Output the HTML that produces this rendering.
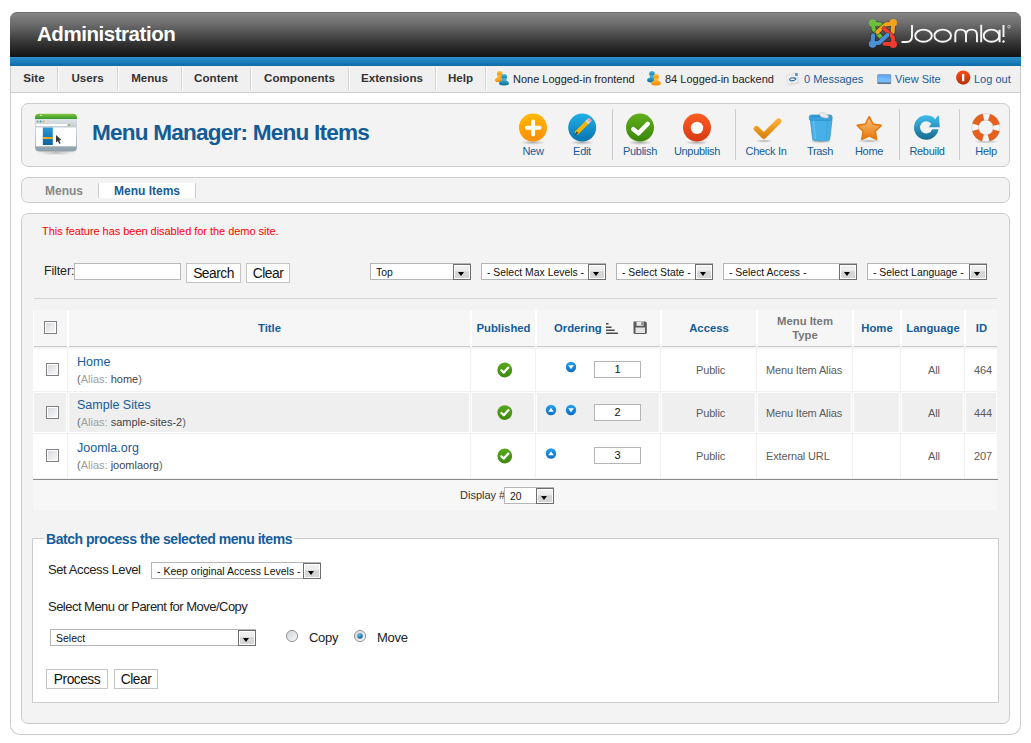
<!DOCTYPE html>
<html><head><meta charset="utf-8">
<style>
*{margin:0;padding:0;box-sizing:border-box}
html,body{width:1031px;height:743px;overflow:hidden;background:#fff;font-family:"Liberation Sans",sans-serif;color:#333}
.a{position:absolute}
#outer{left:10px;top:20px;width:1011px;height:715px;border:1px solid #ccc;border-top:none;border-radius:0 0 10px 10px;background:#fff}
#hdr{left:10px;top:12px;width:1011px;height:45px;border-radius:7px 7px 0 0;background:linear-gradient(#858585 0%,#6c6c6c 25%,#4c4c4c 50%,#2c2c2c 75%,#131313 100%);border-top:1px solid #6e6e6e}
#hdr h1{position:absolute;left:27px;top:9px;font-size:20.5px;font-weight:bold;color:#fff;letter-spacing:-0.45px}
#blue{left:10px;top:57px;width:1011px;height:9px;background:linear-gradient(#2b93cf,#0d6ca8)}
#menubar{left:11px;top:66px;width:1009px;height:27px;background:#f0f0f0;border-bottom:1px solid #ccc}
.mi{position:absolute;top:0;height:26px;line-height:24px;font-size:11.6px;font-weight:bold;color:#333;text-align:center}
.msep{position:absolute;top:1px;width:2px;height:23px;border-left:1px solid #d4d4d4;background:#fff}
.st{position:absolute;top:0;height:26px;line-height:26px;font-size:11px;color:#222;white-space:nowrap}
.st.l{color:#155c9a}
.box{background:#f3f3f3;border:1px solid #ccc;border-radius:7px}
.tb{position:absolute;text-align:center;font-size:11px;letter-spacing:-0.3px;color:#155c9a;white-space:nowrap}
.tsep{position:absolute;top:109px;width:1px;height:51px;background:#ccc}
.sel{position:absolute;height:17px;background:#fff;border:1px solid #b5b5b5;font-size:10.4px;color:#111;line-height:17px;padding-left:5px;white-space:nowrap}
.sel .ar{position:absolute;right:-1px;top:0px;width:18px;height:16px;border:1px solid #6e6e6e;background:#fff}
.sel .ar:before{content:"";position:absolute;left:1px;top:1px;right:1px;bottom:1px;background:linear-gradient(#f0f0f0 0,#ececec 45%,#d6d6d6 46%,#d6d6d6 100%)}
.sel .ar:after{content:"";position:absolute;left:4px;top:7px;border-left:3.5px solid transparent;border-right:3.5px solid transparent;border-top:4px solid #000}
.btn{position:absolute;background:#fff;border:1px solid #c4c4c4;font-size:13.8px;letter-spacing:-0.5px;color:#111;text-align:center}
.th{position:absolute;top:310px;height:37px;background:#f6f6f6;border-bottom:1px solid #c9c9c9;font-size:11.3px;font-weight:bold;color:#155c9a;text-align:center;line-height:36px}
.cb{position:absolute;width:13px;height:13px;border:1px solid #7f7f7f;background:#fff}
.cb:after{content:"";position:absolute;left:1px;top:1px;width:9px;height:9px;background:linear-gradient(135deg,#d9dbe0,#f8f8f8)}

.row{position:absolute;left:33px;width:964px;background:#f0f0f0}
.td{position:absolute;top:0;bottom:1px;background:#fff}
.r1 .td{border:1px solid #fff;background:#efefef}
.tx{position:absolute;font-size:11px;color:#5c5c5c;white-space:nowrap;letter-spacing:-0.15px}
.lnk{position:absolute;font-size:12.5px;color:#155c9a;white-space:nowrap}
.al{position:absolute;font-size:11px;color:#666;white-space:nowrap}
.al i{font-style:normal;color:#a0a0a0}
.al b{font-weight:normal;color:#444}
.oi{position:absolute;width:47px;height:17px;background:#fff;border:1px solid #b4b4b4;font-size:11px;color:#111;text-align:center;line-height:15px}
</style></head><body>
<div id="outer" class="a"></div>
<div id="hdr" class="a"><h1>Administration</h1></div>
<div id="blue" class="a"></div>
<div id="menubar" class="a">
  <div class="mi" style="left:0;width:46px">Site</div><div class="msep" style="left:46px"></div>
  <div class="mi" style="left:47px;width:59px">Users</div><div class="msep" style="left:106px"></div>
  <div class="mi" style="left:107px;width:63px">Menus</div><div class="msep" style="left:170px"></div>
  <div class="mi" style="left:171px;width:68px">Content</div><div class="msep" style="left:239px"></div>
  <div class="mi" style="left:240px;width:97px">Components</div><div class="msep" style="left:337px"></div>
  <div class="mi" style="left:338px;width:86px">Extensions</div><div class="msep" style="left:424px"></div>
  <div class="mi" style="left:425px;width:49px">Help</div><div class="msep" style="left:474px"></div>
  <div class="st" style="left:502px">None Logged-in frontend</div>
  <div class="st" style="left:654px">84 Logged-in backend</div>
  <div class="st l" style="left:793px">0 Messages</div>
  <div class="st l" style="left:884px">View Site</div>
  <div class="st l" style="left:963px">Log out</div>
</div>

<div class="a box" style="left:21px;top:103px;width:989px;height:64px"></div>
<div class="a" style="left:92px;top:120px;font-size:22.6px;font-weight:bold;color:#135c95;white-space:nowrap;letter-spacing:-0.8px">Menu Manager: Menu Items</div>

<div class="a box" style="left:21px;top:177px;width:989px;height:26px"></div>
<div class="a" style="left:45px;top:184px;font-size:12px;font-weight:bold;color:#888">Menus</div>
<div class="a" style="left:98px;top:183px;width:1px;height:15px;background:#ccc"></div>
<div class="a" style="left:99px;top:183px;width:96px;height:15px;background:#fff"></div>
<div class="a" style="left:195px;top:183px;width:1px;height:15px;background:#ccc"></div>
<div class="a" style="left:114px;top:184px;font-size:12px;font-weight:bold;color:#155c9a">Menu Items</div>

<div class="a box" style="left:21px;top:213px;width:989px;height:511px"></div>
<div class="a" style="left:42px;top:225px;font-size:11px;color:#f00;letter-spacing:-0.04px">This feature has been disabled for the demo site.</div>


<!-- filter -->
<div class="a" style="left:44px;top:264px;font-size:12.4px;color:#222;letter-spacing:-0.1px">Filter:</div>
<div class="a" style="left:74px;top:263px;width:107px;height:17px;background:#fff;border:1px solid #b8b8b8"></div>
<div class="btn" style="left:186px;top:263px;width:55px;height:20px;line-height:20px">Search</div>
<div class="btn" style="left:246px;top:263px;width:44px;height:20px;line-height:20px">Clear</div>
<div class="sel" style="left:370px;top:263px;width:101px">Top<div class="ar"></div></div>
<div class="sel" style="left:481px;top:263px;width:125px">- Select Max Levels -<div class="ar"></div></div>
<div class="sel" style="left:616px;top:263px;width:97px">- Select State -<div class="ar"></div></div>
<div class="sel" style="left:723px;top:263px;width:134px">- Select Access -<div class="ar"></div></div>
<div class="sel" style="left:867px;top:263px;width:120px">- Select Language -<div class="ar"></div></div>
<div class="a" style="left:34px;top:298px;width:963px;height:1px;background:#d4d4d4"></div>

<!-- table header -->
<div class="a" style="left:33px;top:310px;width:964px;height:37px;background:#fff"></div>
<div class="th" style="left:34px;width:33px"></div>
<div class="th" style="left:69px;width:401px">Title</div>
<div class="th" style="left:472px;width:63px">Published</div>
<div class="th" style="left:537px;width:123px;text-align:left;padding-left:17px">Ordering</div>
<div class="th" style="left:662px;width:94px">Access</div>
<div class="th" style="left:758px;width:94px;color:#777;line-height:14px;padding-top:4px">Menu Item<br>Type</div>
<div class="th" style="left:854px;width:46px">Home</div>
<div class="th" style="left:902px;width:62px">Language</div>
<div class="th" style="left:966px;width:31px">ID</div>
<div class="cb" style="left:44px;top:321px"></div>
<div class="row" style="top:349px;height:43px"><div class="td" style="left:0px;width:34px"></div><div class="td" style="left:35px;width:402px"></div><div class="td" style="left:438px;width:64px"></div><div class="td" style="left:503px;width:124px"></div><div class="td" style="left:628px;width:95px"></div><div class="td" style="left:724px;width:95px"></div><div class="td" style="left:820px;width:47px"></div><div class="td" style="left:868px;width:63px"></div><div class="td" style="left:932px;width:32px"></div></div>
<div class="cb" style="left:46px;top:363px"></div>
<div class="lnk" style="left:77px;top:355px">Home</div>
<div class="al" style="left:77px;top:373px">(<i>Alias:</i> <b>home</b>)</div>
<div class="oi" style="left:594px;top:361px">1</div>
<div class="tx" style="left:696px;top:364px">Public</div>
<div class="tx" style="left:766px;top:364px">Menu Item Alias</div>
<div class="tx" style="left:928px;top:364px">All</div>
<div class="tx" style="left:974px;top:364px">464</div>
<div class="row r1" style="top:392px;height:42px"><div class="td" style="left:0px;width:34px"></div><div class="td" style="left:35px;width:402px"></div><div class="td" style="left:438px;width:64px"></div><div class="td" style="left:503px;width:124px"></div><div class="td" style="left:628px;width:95px"></div><div class="td" style="left:724px;width:95px"></div><div class="td" style="left:820px;width:47px"></div><div class="td" style="left:868px;width:63px"></div><div class="td" style="left:932px;width:32px"></div></div>
<div class="cb" style="left:46px;top:406px"></div>
<div class="lnk" style="left:77px;top:398px">Sample Sites</div>
<div class="al" style="left:77px;top:416px">(<i>Alias:</i> <b>sample-sites-2</b>)</div>
<div class="oi" style="left:594px;top:404px">2</div>
<div class="tx" style="left:696px;top:407px">Public</div>
<div class="tx" style="left:766px;top:407px">Menu Item Alias</div>
<div class="tx" style="left:928px;top:407px">All</div>
<div class="tx" style="left:974px;top:407px">444</div>
<div class="row" style="top:434px;height:45px"><div class="td" style="left:0px;width:34px"></div><div class="td" style="left:35px;width:402px"></div><div class="td" style="left:438px;width:64px"></div><div class="td" style="left:503px;width:124px"></div><div class="td" style="left:628px;width:95px"></div><div class="td" style="left:724px;width:95px"></div><div class="td" style="left:820px;width:47px"></div><div class="td" style="left:868px;width:63px"></div><div class="td" style="left:932px;width:32px"></div></div>
<div class="cb" style="left:46px;top:449px"></div>
<div class="lnk" style="left:77px;top:441px">Joomla.org</div>
<div class="al" style="left:77px;top:459px">(<i>Alias:</i> <b>joomlaorg</b>)</div>
<div class="oi" style="left:594px;top:447px">3</div>
<div class="tx" style="left:696px;top:450px">Public</div>
<div class="tx" style="left:766px;top:450px">External URL</div>
<div class="tx" style="left:928px;top:450px">All</div>
<div class="tx" style="left:974px;top:450px">207</div>

<div class="a" style="left:33px;top:479px;width:965px;height:1px;background:#8a8a8a"></div>
<div class="a" style="left:33px;top:480px;width:964px;height:30px;background:#f7f7f7"></div>
<div class="a" style="left:460px;top:489px;font-size:11px;color:#333">Display #</div>
<div class="sel" style="left:504px;top:487px;width:50px">20<div class="ar"></div></div>

<!-- batch -->
<div class="a" style="left:32px;top:538px;width:967px;height:165px;border:1px solid #ccc;background:#fff"></div>
<div class="a" style="left:44px;top:538px;width:250px;height:1px;background:#f3f3f3"></div>
<div class="a" style="left:46px;top:531px;font-size:14px;font-weight:bold;letter-spacing:-0.46px;color:#155c9a;white-space:nowrap;line-height:16px">Batch process the selected menu items</div>
<div class="a" style="left:48px;top:562px;font-size:13px;letter-spacing:-0.4px;color:#222">Set Access Level</div>
<div class="sel" style="left:151px;top:562px;width:170px;font-size:10.5px">- Keep original Access Levels -<div class="ar"></div></div>
<div class="a" style="left:48px;top:599px;font-size:13px;letter-spacing:-0.52px;color:#222">Select Menu or Parent for Move/Copy</div>
<div class="sel" style="left:50px;top:629px;width:206px;font-size:10.5px">Select<div class="ar"></div></div>
<div class="a" style="left:309px;top:630px;font-size:13px;letter-spacing:-0.3px;color:#222">Copy</div>
<div class="a" style="left:377px;top:630px;font-size:13px;letter-spacing:-0.3px;color:#222">Move</div>
<div class="btn" style="left:46px;top:669px;width:62px;height:20px;line-height:20px">Process</div>
<div class="btn" style="left:114px;top:669px;width:44px;height:20px;line-height:20px">Clear</div>

<!-- toolbar icons -->
<svg class="a" style="left:505px;top:106px" width="510" height="44" viewBox="505 106 510 44">
<defs>
<radialGradient id="sh" cx="0.5" cy="0.5" r="0.5"><stop offset="0" stop-color="#000" stop-opacity="0.28"/><stop offset="1" stop-color="#000" stop-opacity="0"/></radialGradient>
<linearGradient id="gO" x1="0" y1="0" x2="0" y2="1"><stop offset="0" stop-color="#ffb700"/><stop offset="1" stop-color="#ff8a00"/></linearGradient>
<linearGradient id="gB" x1="0" y1="0" x2="0" y2="1"><stop offset="0" stop-color="#22b0e8"/><stop offset="1" stop-color="#0873b0"/></linearGradient>
<linearGradient id="gG" x1="0" y1="0" x2="0" y2="1"><stop offset="0" stop-color="#5fae1c"/><stop offset="1" stop-color="#3b8708"/></linearGradient>
<linearGradient id="gR" x1="0" y1="0" x2="0" y2="1"><stop offset="0" stop-color="#ff5c22"/><stop offset="1" stop-color="#d63a12"/></linearGradient>
<linearGradient id="gC" x1="0" y1="0" x2="0" y2="1"><stop offset="0" stop-color="#f9ad35"/><stop offset="1" stop-color="#dc8510"/></linearGradient>
<linearGradient id="gS" x1="0" y1="0" x2="0" y2="1"><stop offset="0" stop-color="#f8c27a"/><stop offset="1" stop-color="#e8760a"/></linearGradient>
<linearGradient id="gT" x1="0" y1="0" x2="0" y2="1"><stop offset="0" stop-color="#5cc0ee"/><stop offset="1" stop-color="#3aa4dc"/></linearGradient>
<linearGradient id="gRb" x1="0" y1="0" x2="0" y2="1"><stop offset="0" stop-color="#3fbdec"/><stop offset="1" stop-color="#176a8f"/></linearGradient>
</defs>
<!-- shadows -->
<ellipse cx="533" cy="142.5" rx="12" ry="2.5" fill="url(#sh)"/>
<ellipse cx="582" cy="142.5" rx="12" ry="2.5" fill="url(#sh)"/>
<ellipse cx="640" cy="142.5" rx="12" ry="2.5" fill="url(#sh)"/>
<ellipse cx="697" cy="142.5" rx="12" ry="2.5" fill="url(#sh)"/>
<ellipse cx="764" cy="141" rx="9" ry="1.8" fill="url(#sh)"/>
<ellipse cx="821" cy="141.5" rx="12" ry="2" fill="url(#sh)"/>
<ellipse cx="869" cy="141" rx="12" ry="1.8" fill="url(#sh)"/>
<ellipse cx="986" cy="141.5" rx="12" ry="2" fill="url(#sh)"/>
<!-- New -->
<circle cx="533" cy="127.6" r="14" fill="url(#gO)"/>
<circle cx="533" cy="127.6" r="12" fill="none" stroke="#fff" stroke-opacity="0.12" stroke-width="1"/>
<path d="M526.8 127.8H539.6M533.1 121.6V134.4" stroke="#fff" stroke-width="4" stroke-linecap="round"/>
<!-- Edit -->
<circle cx="582.2" cy="127.6" r="14" fill="url(#gB)"/>
<path d="M576 133.5L589 120.5" stroke="#f7b500" stroke-width="4.2" stroke-linecap="butt"/>
<path d="M586.7 122.8L589.5 120" stroke="#c8d8d8" stroke-width="4.2"/>
<path d="M588.6 120.9L590.6 118.9" stroke="#f0a0a0" stroke-width="4.2"/>
<path d="M574.4 136L576.6 131.2 578.4 133Z" fill="#444"/>
<!-- Publish -->
<circle cx="640" cy="127.6" r="14" fill="url(#gG)"/>
<path d="M633.3 129.2L638.4 133.4 647.8 123.8" fill="none" stroke="#fff" stroke-width="4.4" stroke-linecap="round" stroke-linejoin="round"/>
<!-- Unpublish -->
<circle cx="697" cy="127.6" r="14" fill="url(#gR)"/>
<circle cx="697" cy="127.9" r="6.2" fill="#fafafa"/>
<!-- Check In -->
<path d="M756.5 128.8L763.8 136 778.6 121.2" fill="none" stroke="url(#gC)" stroke-width="5.6" stroke-linecap="round" stroke-linejoin="round"/>
<!-- Trash -->
<path d="M810.3 119.5L812.6 139Q812.9 140.8 814.8 140.8H827.6Q829.5 140.8 829.8 139L832 119.5Z" fill="#47b0e6" stroke="#2f90c8" stroke-width="0.7"/>
<path d="M813.5 121L815.4 138.8" stroke="#8cd4f6" stroke-width="1" stroke-opacity="0.6"/>
<path d="M827.6 121L826.2 138.8" stroke="#2f98d4" stroke-width="1" stroke-opacity="0.5"/>
<path d="M809.3 117Q809.3 115 811.5 115H830Q832.1 115 832.1 117V118.8Q832.1 120.2 830.5 120.2H811Q809.3 120.2 809.3 118.8Z" fill="#3ba6df" stroke="#2a86c0" stroke-width="0.7"/>
<path d="M811 116.8H830.5" stroke="#2a8cc8" stroke-width="1.2"/>
<path d="M819.5 113.5Q821.5 111.8 824.5 113L829 116.5Q828 118.3 825.5 118L821.5 117Q819.2 115.5 819.5 113.5Z" fill="#ebebeb" stroke="#c4c4c4" stroke-width="0.6"/>
<!-- Home star -->
<path d="M869.2 116.7L873.0 124.1L881.2 125.4L875.3 131.3L876.6 139.5L869.2 135.7L861.8 139.5L863.1 131.3L857.2 125.4L865.4 124.1Z" fill="url(#gS)" stroke="#e67a12" stroke-width="1.6" stroke-linejoin="round"/>
<!-- Rebuild -->
<path d="M938.5 129.2A12.3 12.3 0 1 1 935.4 119.2L937.8 115.6Q938.6 115.2 939 116.2L939.8 127.2L928.8 127.2L931.2 123.6A6.2 6.2 0 1 0 932.2 129.2Z" fill="url(#gRb)"/>
<!-- Help lifebuoy -->
<circle cx="985.9" cy="127.5" r="10.8" fill="none" stroke="#f6f6f6" stroke-width="6.6"/>
<circle cx="985.9" cy="127.5" r="14.1" fill="none" stroke="#d4d4d4" stroke-width="0.8"/>
<circle cx="985.9" cy="127.5" r="7.4" fill="none" stroke="#d0d0d0" stroke-width="0.9"/>
<circle cx="985.9" cy="127.5" r="10.8" fill="none" stroke="#e5601d" stroke-width="6.8" stroke-dasharray="11.2 5.76" stroke-dashoffset="-2.88"/>
</svg>
<div class="tb" style="left:513px;top:145px;width:40px">New</div>
<div class="tb" style="left:562px;top:145px;width:40px">Edit</div>
<div class="tb" style="left:610px;top:145px;width:60px">Publish</div>
<div class="tb" style="left:662px;top:145px;width:70px">Unpublish</div>
<div class="tb" style="left:736px;top:145px;width:60px">Check In</div>
<div class="tb" style="left:790px;top:145px;width:60px">Trash</div>
<div class="tb" style="left:839px;top:145px;width:60px">Home</div>
<div class="tb" style="left:897px;top:145px;width:60px">Rebuild</div>
<div class="tb" style="left:956px;top:145px;width:60px">Help</div>
<div class="tsep" style="left:612px"></div>
<div class="tsep" style="left:735px"></div>
<div class="tsep" style="left:899px"></div>
<div class="tsep" style="left:959px"></div>

<!-- header logo -->
<svg class="a" style="left:860px;top:14px" width="160" height="40" viewBox="860 14 160 40">
<g stroke-linecap="round" stroke-linejoin="round" fill="none">
<path d="M873 23.5L880.8 24.6M873.2 23L873.5 29.2L881.2 37.3" stroke="#1a1a1a" stroke-opacity="0.55" stroke-width="5.4"/><path d="M873 23.5L880.8 24.6M873.2 23L873.5 29.2L881.2 37.3" stroke="#6cbf3a" stroke-width="4.1"/><circle cx="872.6" cy="23" r="3.7" fill="#6cbf3a"/>
<path d="M893.3 23L892.6 32.2M893 23.2L885.5 24.6L877.4 31.9" stroke="#1a1a1a" stroke-opacity="0.55" stroke-width="5.4"/><path d="M893.3 23L892.6 32.2M893 23.2L885.5 24.6L877.4 31.9" stroke="#f6a21c" stroke-width="4.1"/><circle cx="893.3" cy="22.7" r="3.7" fill="#f6a21c"/>
<path d="M893.3 44.3L893 37.2L884.3 28.6M893 44.3L884.5 43.8" stroke="#1a1a1a" stroke-opacity="0.55" stroke-width="5.4"/><path d="M893.3 44.3L893 37.2L884.3 28.6M893 44.3L884.5 43.8" stroke="#ee3c2e" stroke-width="4.1"/><circle cx="893.3" cy="44.3" r="3.7" fill="#ee3c2e"/>
<path d="M872.6 44L873 35.3M872.8 43.5L879.2 42.8L887.4 35" stroke="#1a1a1a" stroke-opacity="0.55" stroke-width="5.4"/><path d="M872.6 44L873 35.3M872.8 43.5L879.2 42.8L887.4 35" stroke="#4a90d8" stroke-width="4.1"/><circle cx="872.6" cy="44" r="3.7" fill="#4a90d8"/>
</g>
<g fill="none" stroke="#f4f4f4" stroke-width="1.95">
<path d="M912 25V36Q912 42 906.5 42H901.5"/>
<ellipse cx="923.5" cy="35.7" rx="8.3" ry="6.1"/>
<ellipse cx="942.7" cy="35.7" rx="8.3" ry="6.1"/>
<path d="M955.3 42.3V35Q955.3 29.6 960.5 29.6Q966 29.6 966 35V42.3M966 35Q966 29.6 971.5 29.6Q977 29.6 977 35V42.3"/>
<path d="M981.2 24.8V42.3"/>
<ellipse cx="991.5" cy="35.7" rx="7.8" ry="6.1"/>
<path d="M999.6 29.8V42.3"/>
<path d="M1003.5 25V37"/>
</g>
<circle cx="1003.5" cy="41.5" r="1.2" fill="#f4f4f4"/>
<circle cx="1009" cy="26.7" r="1.3" fill="none" stroke="#ddd" stroke-width="0.7"/>
</svg>

<!-- status icons -->
<svg class="a" style="left:490px;top:66px" width="490" height="26" viewBox="490 66 490 26">
<defs>
<linearGradient id="uo" x1="0" y1="0" x2="0" y2="1"><stop offset="0" stop-color="#ffc23a"/><stop offset="1" stop-color="#f78a06"/></linearGradient>
<linearGradient id="ub" x1="0" y1="0" x2="0" y2="1"><stop offset="0" stop-color="#45c0f0"/><stop offset="1" stop-color="#0d6a8e"/></linearGradient>
<linearGradient id="vs" x1="0" y1="0" x2="0" y2="1"><stop offset="0" stop-color="#6fb5fb"/><stop offset="1" stop-color="#7cc0ff"/></linearGradient>
<linearGradient id="lo" x1="0" y1="0" x2="0" y2="1"><stop offset="0" stop-color="#ff4a12"/><stop offset="1" stop-color="#b8300a"/></linearGradient>
</defs>
<g transform="translate(0,0.8)">
<circle cx="499.7" cy="73" r="2.8" fill="url(#uo)"/><path d="M497.5 74.5H502V77Q503 77.5 503 79.3Q503 81.5 499 81.5Q495 81.5 495 79.3Q495 77.5 497.5 77Z" fill="url(#uo)"/>
<circle cx="504.2" cy="76" r="2.8" fill="url(#ub)"/><path d="M502 77.5H506.5V80Q509 80.5 509 82.5Q509 84.7 504 84.7Q499 84.7 499 82.5Q499 80.5 502 80Z" fill="url(#ub)"/>
</g>
<g transform="translate(0,0.8)">
<circle cx="652" cy="73" r="2.8" fill="url(#ub)"/><path d="M649.8 74.5H654.3V77Q655.5 77.5 655.5 79.3Q655.5 81.7 651 81.7Q647 81.7 647 79.3Q647 77.5 649.8 77Z" fill="url(#ub)"/>
<circle cx="656.1" cy="76" r="2.8" fill="url(#uo)"/><path d="M653.9 77.5H658.4V80Q661 80.5 661 82.5Q661 84.8 656 84.8Q651 84.8 651 82.5Q651 80.5 653.9 80Z" fill="url(#uo)"/>
</g>
<!-- messages -->
<path d="M786.5 75.5L797.5 73.5L799 83L788 85Z" fill="#000" fill-opacity="0.08" transform="translate(0.5,0.8)"/>
<path d="M786 75L797 73L798.5 82.5L787.5 84.5Z" fill="#eeeeee" stroke="#d8d8d8" stroke-width="0.6"/>
<path d="M789.5 79.5Q791 77 793 78Q795 77.5 796 79Q794.5 81 792.5 80.5Q790.5 81.5 789.5 79.5Z" fill="none" stroke="#2b6f9f" stroke-width="1.1"/>
<rect x="795" y="73" width="2.8" height="3" fill="#5a9fd4"/>
<!-- view site -->
<rect x="877.6" y="74.6" width="13.2" height="9" rx="0.8" fill="url(#vs)"/>
<path d="M877.6 77Q884 77 890.8 79V74.6H877.6Z" fill="#5aa2f0" fill-opacity="0.5"/>
<rect x="877.6" y="82.6" width="13.2" height="1.1" fill="#404a58"/>
<rect x="877.6" y="74.6" width="13.2" height="9" rx="0.8" fill="none" stroke="#6a7a8a" stroke-width="0.5"/>
<!-- log out -->
<circle cx="963.2" cy="77.6" r="7.1" fill="url(#lo)"/>
<rect x="962" y="73.9" width="2.3" height="7.3" fill="#fff"/>
</svg>

<!-- page icon -->
<svg class="a" style="left:30px;top:108px" width="52" height="48" viewBox="30 108 52 48">
<defs>
<linearGradient id="pg1" x1="0" y1="0" x2="0" y2="1"><stop offset="0" stop-color="#86c440"/><stop offset="1" stop-color="#2f9a2a"/></linearGradient>
<linearGradient id="pg2" x1="0" y1="0" x2="0" y2="1"><stop offset="0" stop-color="#dfe4e8"/><stop offset="1" stop-color="#c5ccd2"/></linearGradient>
<linearGradient id="pg3" x1="0" y1="0" x2="0" y2="1"><stop offset="0" stop-color="#d9e0e4"/><stop offset="1" stop-color="#8d9ea8"/></linearGradient>
<linearGradient id="pg4" x1="0" y1="0" x2="0" y2="1"><stop offset="0" stop-color="#2a9ad4"/><stop offset="1" stop-color="#0a62a0"/></linearGradient>
<radialGradient id="pgs" cx="0.5" cy="0.5" r="0.5"><stop offset="0" stop-color="#000" stop-opacity="0.22"/><stop offset="1" stop-color="#000" stop-opacity="0"/></radialGradient>
</defs>
<ellipse cx="56" cy="152.5" rx="19" ry="3" fill="url(#pgs)"/>
<path d="M35 119V147Q35 151.5 39.5 151.5H72.5Q77 151.5 77 147V119Z" fill="url(#pg3)"/>
<path d="M35 119V117.5Q35 113.8 39 113.8H73Q77 113.8 77 117.5V119Z" fill="url(#pg1)"/>
<rect x="35.8" y="119" width="40.4" height="8.5" fill="url(#pg2)"/>
<rect x="36" y="124" width="31" height="2" fill="#fff"/>
<rect x="68.3" y="124.2" width="1.6" height="1.6" fill="#6cb33a"/>
<circle cx="37.6" cy="121.5" r="1" fill="#7ab640"/><circle cx="40.6" cy="121.5" r="1" fill="#2d9ad0"/><circle cx="43.6" cy="121.5" r="1" fill="#f5a030"/>
<rect x="35.8" y="127.5" width="40.4" height="18.8" fill="#fff"/>
<rect x="42.8" y="127.5" width="10" height="17.5" fill="url(#pg4)"/>
<rect x="42.8" y="137" width="10" height="2" fill="#f6a91c"/>
<path d="M56 135V142.5L57.8 141L59.5 144L60.7 143.3L59.2 140.5L61.5 140Z" fill="#3a3a3a"/>
<path d="M40 115.3H42" stroke="#fff" stroke-opacity="0.7" stroke-width="1"/>
</svg>

<!-- table icons -->
<svg class="a" style="left:490px;top:315px" width="170" height="165" viewBox="490 315 170 165">
<defs>
<linearGradient id="ck" x1="0" y1="0" x2="0" y2="1"><stop offset="0" stop-color="#5aa81c"/><stop offset="1" stop-color="#3b8a0c"/></linearGradient>
<linearGradient id="ar" x1="0" y1="0" x2="0" y2="1"><stop offset="0" stop-color="#27a0f0"/><stop offset="1" stop-color="#0a6ec2"/></linearGradient>
</defs>
<path d="M606 323.8H608.5M606 327.2H611.5M606 330.2H614.7M606 333.2H617.9" stroke="#4a4a4a" stroke-width="1.6"/>
<path d="M633.5 321.5H645Q646.8 321.5 646.8 323.5V332.5Q646.8 334 645 334H635Q633.5 334 633.5 332.5Z" fill="#5a5a5a"/>
<rect x="635.5" y="327.5" width="9.5" height="5.5" fill="#e4e4e4"/>
<rect x="636.5" y="321.8" width="7" height="4" fill="#e8e8e8"/>
<rect x="641.5" y="322.3" width="1.2" height="2.6" fill="#555"/>
<circle cx="504.8" cy="370" r="7.4" fill="url(#ck)"/><path d="M501.4 370.4L503.8 372.6 508.3 367.6" fill="none" stroke="#fff" stroke-width="2.3" stroke-linecap="round" stroke-linejoin="round"/>
<circle cx="504.8" cy="412.6" r="7.4" fill="url(#ck)"/><path d="M501.4 413.0L503.8 415.20000000000005 508.3 410.20000000000005" fill="none" stroke="#fff" stroke-width="2.3" stroke-linecap="round" stroke-linejoin="round"/>
<circle cx="504.8" cy="456" r="7.4" fill="url(#ck)"/><path d="M501.4 456.4L503.8 458.6 508.3 453.6" fill="none" stroke="#fff" stroke-width="2.3" stroke-linecap="round" stroke-linejoin="round"/>
<circle cx="571" cy="367" r="5.2" fill="url(#ar)"/><path d="M568.2 365.2H573.8L571 369.2Z" fill="#fff"/>
<circle cx="551" cy="410" r="5.2" fill="url(#ar)"/><path d="M548.2 411.8H553.8L551 407.8Z" fill="#fff"/>
<circle cx="571" cy="410" r="5.2" fill="url(#ar)"/><path d="M568.2 408.2H573.8L571 412.2Z" fill="#fff"/>
<circle cx="551" cy="453.5" r="5.2" fill="url(#ar)"/><path d="M548.2 455.3H553.8L551 451.3Z" fill="#fff"/>
</svg>

<svg class="a" style="left:280px;top:625px" width="100" height="22" viewBox="280 625 100 22">
<defs>
<linearGradient id="rd" x1="0" y1="0" x2="1" y2="1"><stop offset="0" stop-color="#cfd3d8"/><stop offset="1" stop-color="#f8f8f8"/></linearGradient>
<radialGradient id="rdot" cx="0.4" cy="0.35" r="0.6"><stop offset="0" stop-color="#5fc4f4"/><stop offset="1" stop-color="#0a5e9c"/></radialGradient>
</defs>
<circle cx="292" cy="636" r="5.6" fill="url(#rd)" stroke="#8a8a8a" stroke-width="0.9"/>
<circle cx="360" cy="636" r="5.6" fill="url(#rd)" stroke="#8a8a8a" stroke-width="0.9"/>
<circle cx="360" cy="636" r="2.7" fill="url(#rdot)"/>
</svg>
</body></html>
